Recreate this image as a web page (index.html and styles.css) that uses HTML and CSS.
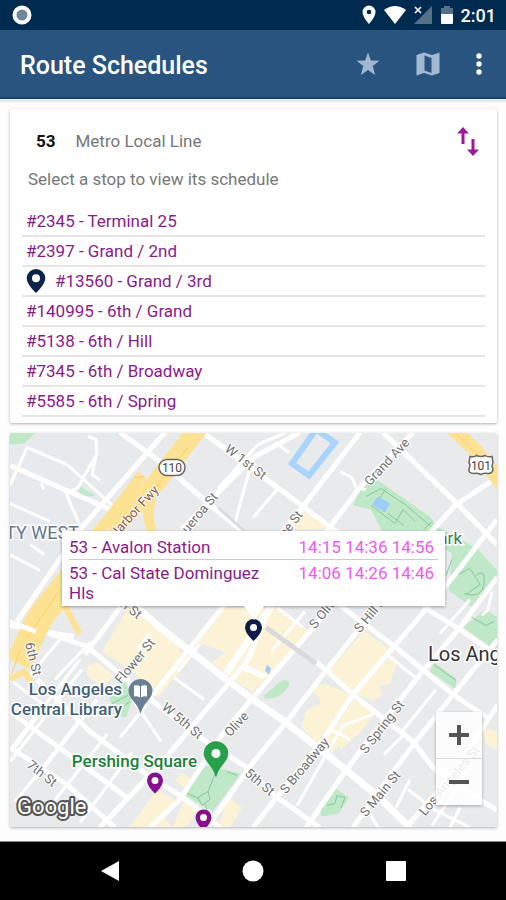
FILE: index.html
```html
<!DOCTYPE html>
<html lang="en">
<head>
  <meta charset="UTF-8">
  <meta name="viewport" content="width=device-width, initial-scale=1.0">
  <title>Route Schedules</title>
  <link rel="stylesheet" href="styles.css">
</head>
<body>

<div class="status-bar">
  <svg class="record" width="20" height="20" viewBox="0 0 20 20"><circle cx="10" cy="10" r="7.5" fill="#6f8798" stroke="#fff" stroke-width="4"/></svg>
  <div class="status-icons">
    <svg width="14" height="20" viewBox="0 0 14 20"><path fill="#fff" fill-rule="evenodd" d="M7 0.500a6.500 6.500 0 0 0-6.500 6.500C.5 12 7 19 7 19s6.500-7 6.500-12A6.500 6.500 0 0 0 7 .5zM7 4.700a2.300 2.300 0 1 1 0 4.600 2.300 2.300 0 0 1 0-4.600z"/></svg>
    <svg width="22" height="18" viewBox="0 0 22 18"><path fill="#fff" d="M0 4Q11-4 22 4L11 18z"/></svg>
    <svg width="19" height="18" viewBox="0 0 19 18"><path fill="#547188" d="M18 0v18H0z"/><path fill="#012a50" d="M0 0h9v8H0z"/><path d="M1 1l6 6M7 1L1 7" stroke="#fff" stroke-width="1.600"/></svg>
    <svg width="12" height="18" viewBox="0 0 12 18"><path fill="#547188" d="M3 0h6v2h3v6H0V2h3z"/><path fill="#fff" d="M0 8h12v9q0 1-1 1H1q-1 0-1-1z"/></svg>
    <span class="clock">2:01</span>
  </div>
</div>

<header class="app-bar">
  <h1>Route Schedules</h1>
  <button class="icon-button" aria-label="Favorite">
    <svg width="24" height="24" viewBox="0 0 24 24"><path fill="#a3b8d1" d="M12 0.500l2.900 8 8.600.3-6.800 5.300 2.400 8.900-7.100-5.100L4.900 23l2.400-8.900L.5 8.800l8.600-.3z"/></svg>
  </button>
  <button class="icon-button" aria-label="Map">
    <svg width="24" height="24" viewBox="0 0 24 24"><path fill="#a3b8d1" fill-rule="evenodd" d="M.5 3l7.500-2.500 8 2.500L23.500.5V21L16 23.500 8 21 .5 23.500zM8.500 3.500v15l7 2.500V6z"/></svg>
  </button>
  <button class="icon-button" aria-label="More options">
    <svg width="6" height="22" viewBox="0 0 6 22"><g fill="#fff"><circle cx="3" cy="3" r="2.700"/><circle cx="3" cy="11" r="2.700"/><circle cx="3" cy="19" r="2.700"/></g></svg>
  </button>
</header>

<main>
  <section class="card route-card">
    <div class="route-header">
      <span class="route-number">53</span>
      <span class="route-name">Metro Local Line</span>
      <button class="swap-button" aria-label="Change direction">
        <svg width="22" height="30" viewBox="0 0 22 30"><g fill="#9b1a9b"><path d="M6 1l6 6.500H7.500V18h-3V7.500H0z"/><path d="M16 30l-6-6.500h4.500V13h3v10.500H22z"/></g></svg>
      </button>
    </div>
    <p class="hint">Select a stop to view its schedule</p>
    <ul class="stop-list">
      <li><a href="#">#2345 - Terminal 25</a></li>
      <li><a href="#">#2397 - Grand / 2nd</a></li>
      <li><a href="#"><svg width="20" height="24" viewBox="0 0 20 24"><path fill="#0e2348" fill-rule="evenodd" d="M10 0a9.300 9.300 0 0 0-9.300 9.300C.7 15.500 10 24 10 24s9.300-8.500 9.300-14.700A9.300 9.300 0 0 0 10 0zm0 5.200a4 4 0 1 1 0 8 4 4 0 0 1 0-8z"/></svg>#13560 - Grand / 3rd</a></li>
      <li><a href="#">#140995 - 6th / Grand</a></li>
      <li><a href="#">#5138 - 6th / Hill</a></li>
      <li><a href="#">#7345 - 6th / Broadway</a></li>
      <li><a href="#">#5585 - 6th / Spring</a></li>
    </ul>
  </section>

  <section class="card map-card">
    <svg class="map" viewBox="10 433 487 395" preserveAspectRatio="xMidYMid slice">
      <rect x="10" y="433" width="487" height="395" fill="#e9eaeb"/>
      <path fill="#e6eaed" d="M10 433h108l40 30-76 66-70 92H10z"/>

      <!-- commercial blocks -->
      <g fill="#fcf3d6">
        <path d="M303 510l28 20h-42z"/>
        <path d="M128 608l54 38-32 38-48-32z"/>
        <path d="M150 636l28 14 12 10-32 38-22-16z"/>
        <path d="M88 666l10-3 16 13-12 12-15-12z"/>
        <path d="M225 608h55l28 23-20 24-36 38-40-30 14-10-28-10z"/>
        <path d="M364 631l27 20-39 44-24-22z"/>
        <path d="M392 656l6 4-8 24-10 2 2 10-10 6-17-9z"/>
        <path d="M324 684l29 12-26 36-6 14-20-18 6-18 14-6-2-6-8-8z"/>
        <path d="M354 700l21 14-14 18-20 18-12-14z"/>
        <path d="M320 734l22 8-10 12-10-8z"/>
        <path d="M182 773l12 8-6 10-13-10z"/>
        <path d="M158 790l20 13-14 14 8 11h-43z"/>
        <path d="M184 802l14 9-12 17h-14z"/>
        <path d="M228 798l14 10-12 20h-12z"/>
        <path d="M482 728l15 4v18l-12-6z"/>
      </g>

      <!-- parks -->
      <g fill="#bfe8c8">
        <path d="M10 433h26l-12 11-14 1z"/>
        <path d="M80 487l16 9-18 2z"/>
        <path d="M363 484l15-3 26 18 14 10 12 8 7 10 40 22 22 24-28 34-22-16 3-38-70-21-11-22-18-4z"/>
        <path d="M463 628l22-18 13 8v34z"/>
        <path d="M434 663l22 16v11l-26-18z"/>
        <path d="M264 696l16-14q10-4 9 4-8 14-25 13z"/>
        <path d="M109 698l16-16 8 16-7 20-12-4z"/>
        <path d="M206 766l35 8-28 38-30-17z"/>
        <path d="M320 805l16-16 13 9-10 16-18 3z"/>
      </g>
      <g fill="none" stroke="#86c79a" stroke-width="1">
        <path d="M366 497l15-8 24 16 26 22M371 506l24 18 8-14 12 12M386 489l-8 12M424 530l8-8M388 514l16 12"/>
        <path d="M458 575l12-6 10 16-14 10M476 576q10-8 8 8t-20 10M452 560l-6 16M472 618l14 8 8-4"/>
        <path d="M216 772l-8 20-10 6 4 8 8-6-2-8M198 799l-12-6M205 806l4 8M227 772l10 4"/>
        <path d="M327 806l8-2 2-8 8 2-4 10M434 665l22 16"/>
        <path d="M112 704l16-8M116 712l14-10"/>
      </g>
      <path fill="#9ccdf8" d="M378 497l12 7-5 9-13-8zM267 665l4 4-2 6-4-4z"/>
      <path fill="none" stroke="#a7d5fb" stroke-width="6" d="M316 430l19 13-26 33-17-12z"/>

      <!-- minor streets -->
      <g fill="none" stroke="#fff" stroke-width="3" stroke-linejoin="round">
        <path d="M10 486l17-38 40 17 50 45M88 437l8 3 1 14-19 34-12 6 14 32M97 452l-5 23 8 6M44 490l-3-6M10 504l40 18M30 545l14 10M10 555l30 16"/>
        <path d="M286 433l-28 12-40 44M253 458l-18 65M275 443l14 10M340 472l12 6 4 10 10 2M277 490l-24 28"/>
        <path d="M20 738l60-78M97 700l-62 80M82 670l-72 92M80 720l-45 58-20 24M107 735l-62 78M132 753l-52 70M147 705l-27 33M174 678l30 22M178 672l22-28M133 700l28 42"/>
        <path d="M10 680l50 38M60 640l-30 36M55 680l36-38"/>
        <path d="M328 728l22 12M375 714l-32 12-46 80M436 690l-34 42M388 656l30 24M404 735l-20 20M410 780l-14 28M408 790l26 20 36 18M432 826l24-36 16-26M370 815l8 13M450 828l10-20M470 600l-30 34"/>
        <path d="M492 592l-4 18-6 6M277 608l26 20M305 612l-34 40M253 655l-10 10 24 12M240 668l24 10"/>
      </g>

      <!-- main streets -->
      <g fill="none" stroke="#fff" stroke-width="5" stroke-linejoin="round">
        <path d="M165 433L80 530 17 622"/>
        <path d="M120 433l40 29 53 46 40 32"/>
        <path d="M203 433l57 42 43 32 40 30"/>
        <path d="M300 433l-47 25-40 40-31 32M130 595l-45 60"/>
        <path d="M10 466l50 22 60 26"/>
        <path d="M360 433l-57 74-80 100-73 92"/>
        <path d="M413 433l-53 55-90 118-23 56-87 103-60 63"/>
        <path d="M383 433l73 70 41 42"/>
        <path d="M494 480l-38 25-23 25-60 82-50 63-37 48-33 40-46 65"/>
        <path d="M350 585l-34 40-63 73-31 37-42 65-30 28"/>
        <path d="M497 520l-42 55-42 50-60 70-33 50-45 55-22 28"/>
        <path d="M497 578l-37 50-40 47-57 73-20 27-37 53"/>
        <path d="M498 640l-45 55-37 47-20 26-43 60"/>
        <path d="M498 705l-15 23-30 47-47 53"/>
        <path d="M150 635l-12 16"/>
        <path d="M316 662l37 33 60 47 20 26 47 32 17 11"/>
        <path d="M340 606l56 42 57 47 34 23"/>
        <path d="M423 607l37 23 37 26"/>
        <path d="M10 626l33 6 44 15 30 25 36 30 47 36 47 30 26 27 47 33"/>
        <path d="M37 680l53 52 57 43 36 23 37 30"/>
        <path d="M10 712l117 86M10 748l57 37 48 43"/>
        <path d="M12 750l25-34"/>
      </g>
      <g fill="none" stroke="#fff" stroke-width="7">
        <path d="M130 602l30 26 60 47 33 25 33 23 57 45 33 27 34 33"/>
        <path d="M272 606l-46 68"/>
      </g>
      <path fill="none" stroke="#d9dadc" stroke-width="5" d="M266 628l50 36"/>
      <path fill="none" stroke="#d9dadc" stroke-width="3" d="M218 508l27 24"/>

      <!-- freeways -->
      <g fill="none" stroke="#fde293">
        <path stroke-width="19" d="M201 425l-44 57-46 50"/>
        <path stroke-width="10" d="M142 475l-34 45-12 14M152 492l-4 24 4 18"/>
        <path stroke-width="26" d="M75 574l-35 44-22 46"/>
        <path stroke-width="6" d="M64 600q4 16 16 34M10 680l14-8 8 12"/>
        <path stroke-width="14" d="M448 425l28 26 26 34"/>
      </g>
      <path fill="none" stroke="#f7d070" d="M188 448l-34 42-44 46M60 590l-34 50M134 478l10-1M20 650l-8 24M455 434l34 32"/>
      <path fill="none" stroke="#fff" stroke-width="5" d="M8 622l28 10M48 633l26 4"/>

      <!-- street names -->
      <g class="street">
        <text transform="translate(224 451) rotate(38)">W 1st St</text>
        <text transform="translate(370 487) rotate(-47)">Grand Ave</text>
        <text transform="translate(183 540) rotate(-50)">gueroa St</text>
        <text transform="translate(115 540) rotate(-48)" fill="#8a5a3c">Harbor Fwy</text>
        <text transform="translate(275 552) rotate(-52)">Hope St</text>
        <text transform="translate(99 590) rotate(38)">W 4th St</text>
        <text transform="translate(315 630) rotate(-50)">S Olive St</text>
        <text transform="translate(360 634) rotate(-50)">S Hill St</text>
        <text transform="translate(25 644) rotate(76)">6th St</text>
        <text transform="translate(121 685) rotate(-50)">Flower St</text>
        <text transform="translate(161 709) rotate(40)">W 5th St</text>
        <text transform="translate(230 738) rotate(-47)">Olive</text>
        <text transform="translate(244 775) rotate(40)">5th St</text>
        <text transform="translate(286 795) rotate(-50)">S Broadway</text>
        <text transform="translate(366 755) rotate(-52)">S Spring St</text>
        <text transform="translate(366 818) rotate(-50)">S Main St</text>
        <text transform="translate(425 817) rotate(-50)">Los Angeles St</text>
        <text transform="translate(26 767) rotate(38)">7th St</text>
      </g>

      <!-- place names -->
      <g class="place">
        <text class="district" x="79" y="539" fill="#64788f" text-anchor="end">CITY WEST</text>
        <text class="park" x="462" y="544" fill="#3d8050" text-anchor="end">Park</text>
        <text x="122" y="695" fill="#3f6178" text-anchor="end">Los Angeles</text>
        <text x="122" y="715" fill="#3f6178" text-anchor="end">Central Library</text>
        <text x="197" y="767" fill="#188038" text-anchor="end">Pershing Square</text>
      </g>
      <text class="city" x="428" y="661">Los Angeles</text>

      <!-- highway shields -->
      <rect x="159" y="460" width="26" height="16" rx="8" fill="#fff" stroke="#666" stroke-width="1.500"/>
      <text class="shield" x="172" y="472">110</text>
      <path fill="#fff" stroke="#666" stroke-width="1.500" d="M470 457q5 1 6-1 5 2 9 0 3 2 7 1l1 6q-2 4 0 6 0 5-5 5-4-1-7 1-4-2-7-1-6 0-5-5 2-3 0-6z"/>
      <text class="shield" x="481" y="470">101</text>

      <!-- pins -->
      <g>
        <path fill="#6b7f92" d="M140.500 679.500a12 12 0 0 0-12 12c0 8 9 11 12 23 3-12 12-15 12-23a12 12 0 0 0-12-12z"/>
        <path fill="#fff" d="M134 686q4-1 6 1v11q-3-2-6-1zM147 686q-4-1-6 1v11q3-2 6-1z"/>
        <path fill="#27a04c" stroke="#178039" stroke-width=".5" d="M216 742a12 12 0 0 0-12 12c0 8 9 12 12 23 3-11 12-15 12-23a12 12 0 0 0-12-12z"/>
        <circle cx="216" cy="754" r="4.500" fill="#fff"/>
        <path fill="#850f8c" d="M155 773a8 8 0 0 0-8 8c0 6 8 13 8 13s8-7 8-13a8 8 0 0 0-8-8z"/>
        <circle cx="155" cy="781" r="3.500" fill="#fff"/>
        <path fill="#850f8c" d="M203.500 810a8 8 0 0 0-8 8c0 6 8 13 8 13s8-7 8-13a8 8 0 0 0-8-8z"/>
        <circle cx="203.500" cy="818" r="3.500" fill="#fff"/>
        <path fill="#0e1c48" d="M253.500 619.500a8.500 8.500 0 0 0-8.500 8.500c0 6 8.500 13.500 8.500 13.500s8.500-7.500 8.500-13.500a8.500 8.500 0 0 0-8.500-8.500z"/>
        <circle cx="253.500" cy="628" r="3.500" fill="#fff"/>
      </g>
      <text class="google" x="17" y="814">Google</text>
    </svg>

    <div class="popup">
      <table>
        <tr><td>53 - Avalon Station</td><td class="times">14:15 14:36 14:56</td></tr>
        <tr><td>53 - Cal State Dominguez Hls</td><td class="times">14:06 14:26 14:46</td></tr>
      </table>
    </div>

    <div class="zoom-control">
      <button aria-label="Zoom in"><svg width="22" height="22" viewBox="0 0 22 22"><path stroke="#555" stroke-width="4" d="M1 11h20M11 1v20"/></svg></button>
      <button aria-label="Zoom out"><svg width="22" height="22" viewBox="0 0 22 22"><path stroke="#555" stroke-width="4" d="M1 11h20"/></svg></button>
    </div>
  </section>
</main>

<nav class="nav-bar">
  <button aria-label="Back"><svg width="20" height="22" viewBox="0 0 20 22"><path fill="#fff" d="M19 1v20L1 11z"/></svg></button>
  <button aria-label="Home"><svg width="22" height="22" viewBox="0 0 22 22"><circle cx="11" cy="11" r="10.500" fill="#fff"/></svg></button>
  <button aria-label="Recent apps"><svg width="20" height="20" viewBox="0 0 20 20"><rect width="20" height="20" rx="1" fill="#fff"/></svg></button>
</nav>

</body>
</html>
```
FILE: styles.css
```css
* {
  box-sizing: border-box;
}
body {
  margin: 0;
  min-height: 100vh;
  display: flex;
  flex-direction: column;
  font-family: Roboto, sans-serif;
  font-size: 17px;
  background: #fdfdfe;
}
button {
  display: flex;
  align-items: center;
  justify-content: center;
  padding: 0;
  border: 0;
  background: none;
}
svg {
  display: block;
}
.status-bar {
  height: 30px;
  padding: 0 10px 0 12px;
  display: flex;
  align-items: center;
  justify-content: space-between;
  background: #012a50;
}
.status-icons {
  display: flex;
  align-items: center;
  gap: 8px;
  color: #fff;
}
.clock {
  font-size: 18px;
  font-weight: 500;
}
.app-bar {
  height: 69px;
  padding: 0 12px 0 20px;
  display: flex;
  align-items: center;
  gap: 20px;
  background: #29547f;
  border-bottom: 2px solid #163f70;
  box-shadow: 0 3px 1px #e3e9ee;
}
.app-bar h1 {
  flex: 1;
  margin: 0;
  padding-top: 4px;
  font-size: 25px;
  font-weight: 500;
  color: #fff;
}
.icon-button {
  width: 40px;
  height: 40px;
}
.icon-button:last-child {
  width: 30px;
  margin-left: -4px;
}
main {
  flex: 1;
  display: flex;
  flex-direction: column;
  gap: 10px;
  padding: 10px 9px 14px 10px;
}
.card {
  background: #fff;
  border-radius: 2px;
  box-shadow: 0 1px 3px rgba(0, 0, 0, 0.3);
}
.route-card {
  padding: 12px 12px 6px;
}
.route-header {
  display: flex;
  align-items: center;
  gap: 20px;
  height: 40px;
  padding: 0 6px 0 14px;
}
.route-number {
  font-weight: 700;
  color: #111;
}
.route-name,
.hint {
  color: #777;
}
.swap-button {
  margin-left: auto;
}
.hint {
  margin: 8px 6px 18px;
  line-height: 20px;
}
.stop-list {
  list-style: none;
  margin: 0;
  padding: 0;
}
.stop-list li {
  border-bottom: 2px solid #e5e5e5;
}
.stop-list a {
  display: flex;
  align-items: center;
  gap: 9px;
  height: 28px;
  padding: 0 4px;
  color: #8a1a8c;
  text-decoration: none;
}
.map-card {
  flex: 1;
  min-height: 300px;
  position: relative;
  overflow: hidden;
}
.map {
  position: absolute;
  width: 100%;
  height: 100%;
}
.street {
  font-size: 13px;
  fill: #707070;
  stroke: #fff;
  stroke-width: 2px;
  paint-order: stroke;
}
.place {
  font-size: 17px;
  font-weight: 500;
  stroke: #fff;
  stroke-width: 3px;
  paint-order: stroke;
}
.district {
  font-size: 18px;
  font-weight: 400;
}
.park {
  font-weight: 400;
}
.city {
  font-size: 20px;
  fill: #333;
  stroke: #fff;
  stroke-width: 3px;
  paint-order: stroke;
}
.shield {
  font-size: 12px;
  text-anchor: middle;
  fill: #444;
}
.google {
  font-size: 22px;
  fill: #fff;
  stroke: #555;
  stroke-width: 4px;
  stroke-linejoin: round;
  paint-order: stroke;
}
.popup {
  position: absolute;
  top: 98px;
  left: 52px;
  right: 52px;
  padding: 3px 7px 1px;
  background: #fff;
  box-shadow: 0 1px 3px rgba(0, 0, 0, 0.35);
}
.popup::after {
  content: "";
  position: absolute;
  top: 100%;
  left: 50%;
  margin-left: -10px;
  border: 10px solid transparent;
  border-top: 14px solid #fff;
  border-bottom: 0;
}
.popup table {
  width: 100%;
  border-collapse: collapse;
  line-height: 20px;
  color: #8a1a8c;
}
.popup td {
  padding: 3px 0 2px;
  vertical-align: top;
}
.popup tr + tr td {
  border-top: 1px solid #ccc;
}
.popup .times {
  padding-left: 24px;
  padding-right: 4px;
  text-align: right;
  white-space: nowrap;
  color: #ec5af0;
}
.zoom-control {
  position: absolute;
  right: 15px;
  bottom: 22px;
  background: rgba(255, 255, 255, 0.85);
  box-shadow: 0 1px 3px rgba(0, 0, 0, 0.3);
}
.zoom-control button {
  width: 46px;
  height: 46px;
}
.zoom-control button + button {
  height: 47px;
  border-top: 1px solid #ddd;
}
.nav-bar {
  height: 59px;
  display: flex;
  align-items: center;
  justify-content: center;
  gap: 99px;
  background: #000;
  border-top: 1px solid #888;
}
.nav-bar button {
  width: 44px;
  height: 44px;
}
```
